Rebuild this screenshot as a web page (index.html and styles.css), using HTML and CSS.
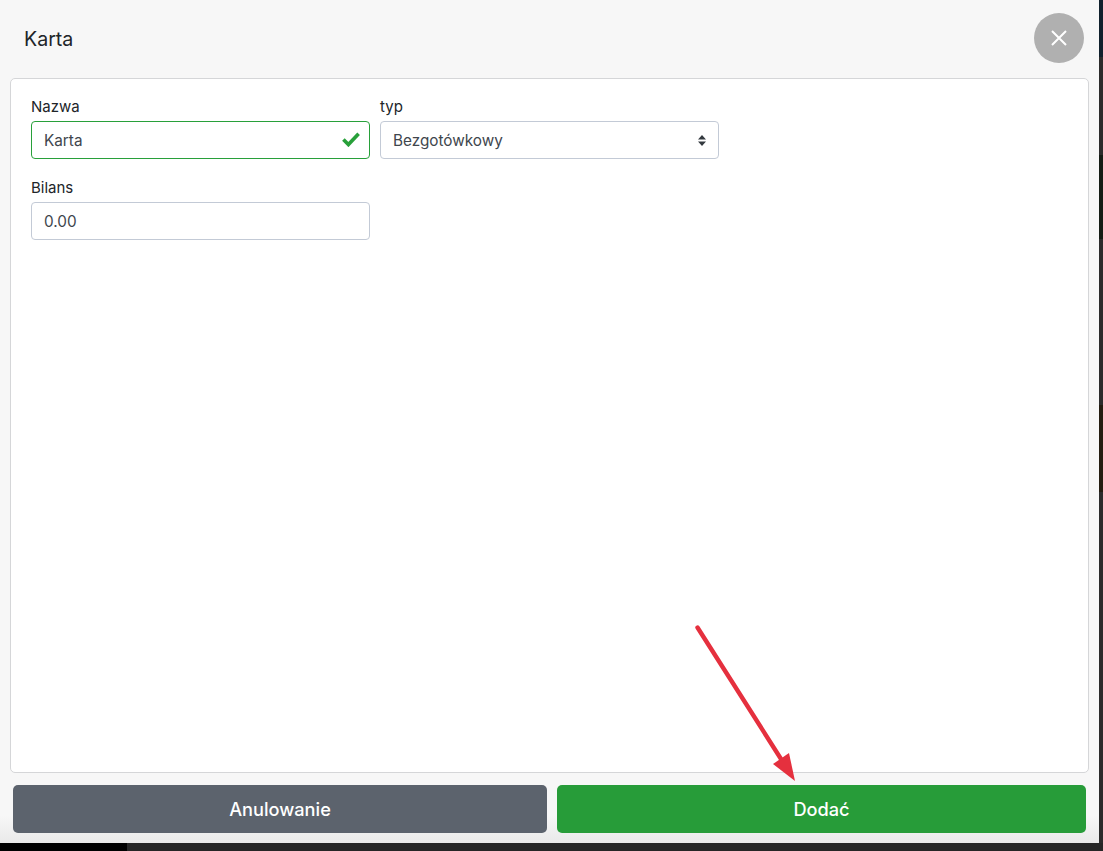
FILE: index.html
```html
<!DOCTYPE html>
<html lang="pl">
<head>
<meta charset="utf-8">
<title>Karta</title>
<link rel="stylesheet" href="styles.css">
</head>
<body>
<div class="backdrop">
  <div class="side">
    <div class="band band-navy"></div>
    <div class="band band-grey"></div>
    <div class="band band-green"></div>
    <div class="band band-grey2"></div>
    <div class="band band-brown"></div>
    <div class="band band-rest"></div>
  </div>
  <div class="floor"><div class="floor-black"></div><div class="floor-grey"></div></div>
</div>
<main class="modal">
  <header class="modal-header">
    <h1 class="modal-title">Karta</h1>
    <button class="close" type="button" aria-label="Zamknij">
      <svg width="16" height="16" viewBox="0 0 16 16"><path d="M1 1L15 15M15 1L1 15" stroke="#fff" stroke-width="2" fill="none"/></svg>
    </button>
  </header>
  <section class="card">
    <div class="form-row">
      <div class="field">
        <label class="label">Nazwa</label>
        <div class="input valid">Karta
          <svg class="check" width="18" height="15" viewBox="0 0 18 15"><path d="M1.4 7.6L6.4 12.6L16.6 1.8" stroke="#28a03a" stroke-width="3.6" fill="none"/></svg>
        </div>
      </div>
      <div class="field">
        <label class="label">typ</label>
        <div class="input select">Bezgotówkowy
          <svg class="arrows" width="8" height="11" viewBox="0 0 8 11"><path d="M4 0L8 4.4H0ZM4 11L0 6.6H8Z" fill="#343a40"/></svg>
        </div>
      </div>
    </div>
    <div class="form-row">
      <div class="field">
        <label class="label">Bilans</label>
        <div class="input">0.00</div>
      </div>
    </div>
  </section>
  <footer class="actions">
    <button class="btn btn-cancel" type="button">Anulowanie</button>
    <button class="btn btn-add" type="button">Dodać</button>
  </footer>
</main>
<svg class="annotation" width="120" height="170" viewBox="0 0 120 170">
  <path d="M2.5 2.5L86 134" stroke="#e5303e" stroke-width="4.4" stroke-linecap="round" fill="none"/>
  <path d="M100 156L78 139L94 128Z" fill="#e5303e"/>
</svg>
</body>
</html>
```
FILE: styles.css
```css
* { box-sizing: border-box; }
html, body { margin: 0; height: 100%; }
body {
  width: 1103px;
  height: 851px;
  overflow: hidden;
  position: relative;
  font-family: Inter, "Liberation Sans", sans-serif;
  background: #222;
}
.backdrop { position: absolute; inset: 0; }
.side { position: absolute; top: 0; right: 0; bottom: 0; width: 4px; display: flex; flex-direction: column; }
.band-navy { height: 57px; background: #10202c; }
.band-grey { height: 98px; background: #2b2b2b; }
.band-green { height: 84px; background: #141c14; }
.band-grey2 { height: 166px; background: #2b2b2b; }
.band-brown { height: 87px; background: #231c10; }
.band-rest { flex: 1; background: #2b2b2b; }
.floor { position: absolute; left: 0; right: 0; bottom: 0; height: 8px; display: flex; }
.floor-black { width: 127px; background: #000; }
.floor-grey { flex: 1; background: #262626; }
.modal {
  position: absolute;
  top: 0;
  left: 0;
  width: 1099px;
  height: 843px;
  background: linear-gradient(#f7f7f7 0, #f7f7f7 815px, #e9e9e9 843px);
  display: flex;
  flex-direction: column;
  padding: 0 10px 10px;
}
.modal-header {
  height: 78px;
  flex: none;
  display: flex;
  align-items: flex-start;
  justify-content: space-between;
  padding: 13px 5px 0 14px;
}
.modal-title {
  margin: 14px 0 0;
  font-size: 19.6px;
  line-height: 24px;
  font-weight: 400;
  color: #212529;
}
.close {
  width: 50px;
  height: 50px;
  border: 0;
  border-radius: 50%;
  background: #b0b0b0;
  padding: 0;
  display: flex;
  align-items: center;
  justify-content: center;
}
.card {
  flex: 1;
  background: #fff;
  border: 1px solid #d5d6d8;
  border-radius: 5px;
  padding: 18px 20px 0;
}
.form-row { display: flex; gap: 10px; margin-bottom: 19px; }
.field { width: 339px; }
.label {
  display: block;
  font-size: 15px;
  line-height: 20px;
  color: #212529;
  margin-bottom: 4px;
}
.input {
  height: 38px;
  border: 1px solid #c3cad6;
  border-radius: 4px;
  background: #fff;
  padding: 1px 12px 0;
  font-size: 15.3px;
  line-height: 36px;
  color: #40464d;
  position: relative;
}
.valid { border-color: #28a03a; }
.check { position: absolute; right: 9px; top: 10px; }
.arrows { position: absolute; right: 12px; top: 13px; }
.actions { flex: none; display: flex; gap: 10px; padding: 12px 3px 0; }
.btn {
  height: 48px;
  border: 0;
  border-radius: 5px;
  color: #fff;
  font-family: inherit;
  font-size: 18.2px;
  font-weight: 500;
}
.btn-cancel { width: 534px; background: #5c636d; }
.btn-add { width: 529px; background: #279c39; }
.annotation { position: absolute; left: 695px; top: 625px; overflow: visible; }
```
